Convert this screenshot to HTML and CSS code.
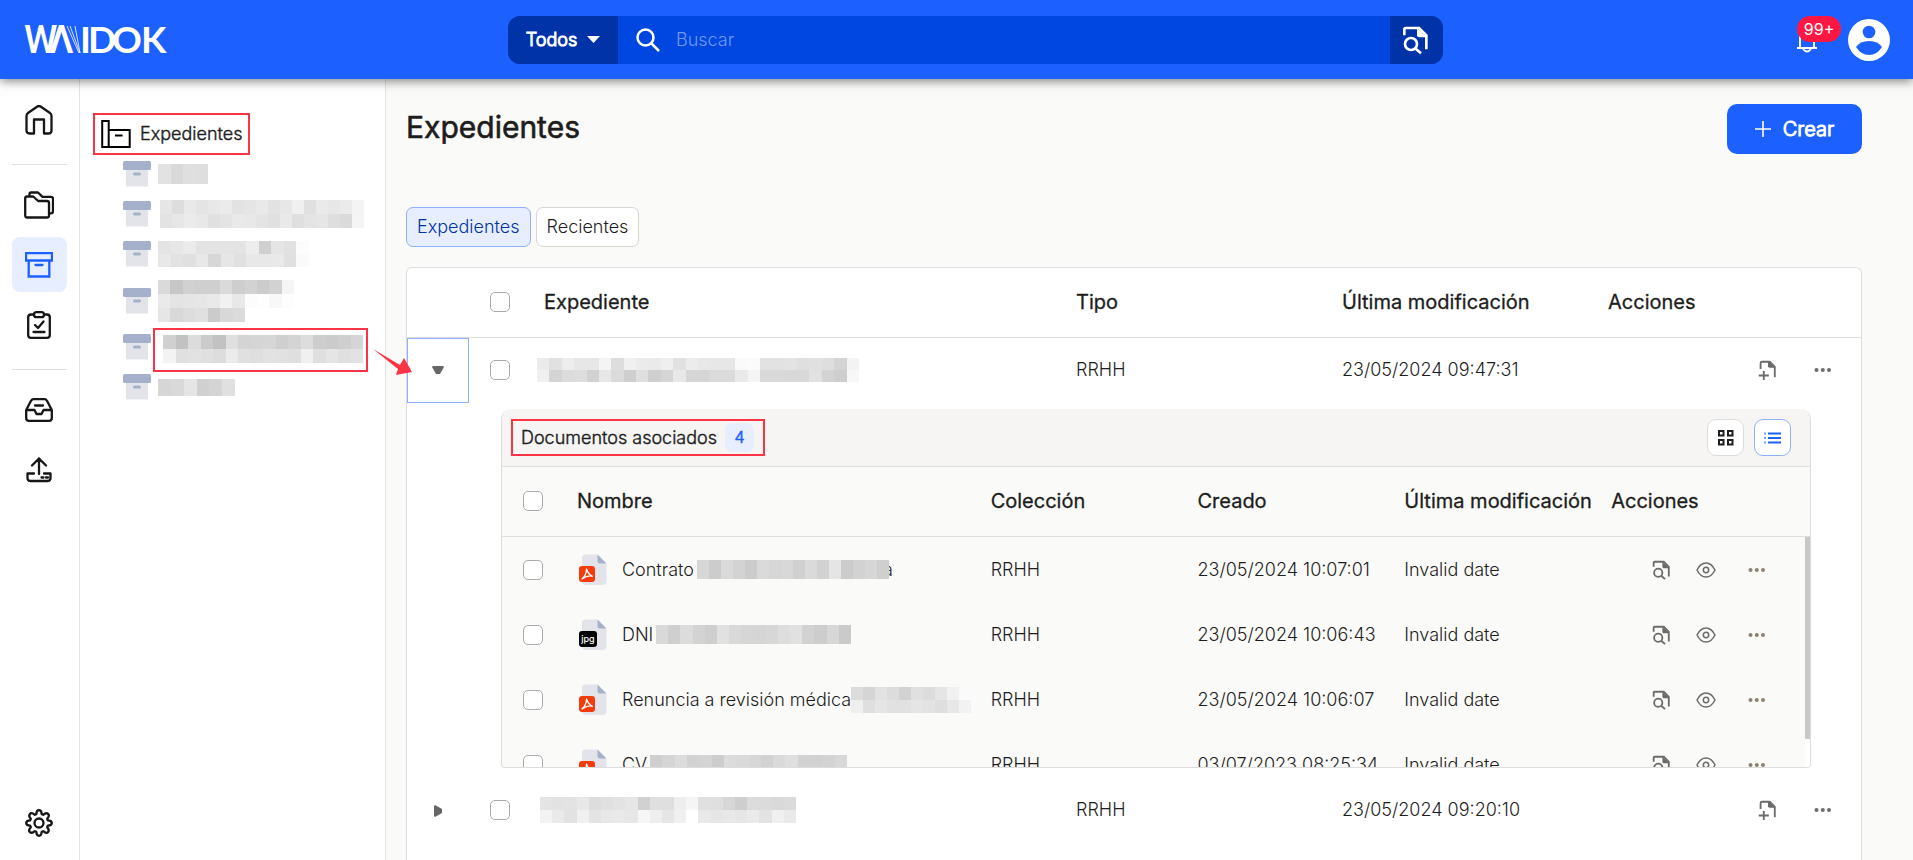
FILE: index.html
```html
<!DOCTYPE html>
<html lang="es">
<head>
<meta charset="utf-8">
<title>Expedientes</title>
<link rel="stylesheet" href="styles.css">
</head>
<body>
<svg class="defs" aria-hidden="true">
  <symbol id="archive" viewBox="0 0 28 26"><path d="M3 8h22v17.500H3z" fill="#e2e4ea"/><rect width="28" height="9" rx="1.500" fill="#a5b1ca"/><rect x="10" y="11.500" width="8" height="3" rx="1.500" fill="#a5b1ca"/></symbol>
  <symbol id="doc-search" viewBox="0 0 24 24"><g fill="none" stroke="currentColor" stroke-width="2"><path d="M4 8.500V4q0-1 1-1h10l5.500 5.500V19"/><circle cx="9" cy="15" r="4.500"/><path d="m12.500 18.500 4 3.500"/></g><path d="M13.500 3 21 10h-6q-1.500 0-1.500-1.500z" fill="currentColor"/></symbol>
  <symbol id="doc-add" viewBox="0 0 24 24"><g fill="none" stroke="currentColor" stroke-width="2"><path d="M5 11V4.500Q5 3 6.500 3H15l5.500 5.500V20M8.500 13v10M3 18h11"/></g><path d="M13 3h2l6 6.500h-6q-2 0-2-1.500z" fill="currentColor"/></symbol>
  <symbol id="eye" viewBox="0 0 20 16"><g fill="none" stroke="currentColor" stroke-width="1.500"><path d="M1 8Q4.500 1 10 1t9 7q-3.500 7-9 7T1 8z"/><circle cx="10" cy="8" r="2.700"/></g></symbol>
  <symbol id="dots" viewBox="0 0 18 4"><g fill="currentColor"><circle cx="2.500" cy="2" r="2"/><circle cx="8.800" cy="2" r="2"/><circle cx="15" cy="2" r="2"/></g></symbol>
  <symbol id="page" viewBox="0 0 28 32"><path d="M3 4q0-3.500 3.500-3.500H18L27.500 10v17q0 4-4 4H7q-4 0-4-4z" fill="#e2e4ea"/><path d="M18.500.5 27.500 9.500H21q-2.500 0-2.500-2.500z" fill="#a5b1ca"/></symbol>
  <symbol id="pdf" viewBox="0 0 28 32"><use href="#page"/><rect y="12" width="16" height="16" rx="3" fill="#f53a0c"/><path d="M7.500 15q1.500 5 6 7.300-4.500-1.500-10.500 2.700 4.500-4 4.500-10z" fill="none" stroke="#fff" stroke-width="1.300" stroke-linejoin="round"/></symbol>
  <symbol id="jpg" viewBox="0 0 28 32"><use href="#page"/><rect y="12" width="18" height="16" rx="3" fill="#000"/><text x="9" y="23" text-anchor="middle" fill="#fff" font-family="Inter, sans-serif" font-size="9" font-weight="500">jpg</text></symbol>
</svg>

<header class="topbar">
  <a class="brand" href="#" aria-label="WAIDOK">
    <svg width="144" height="30" viewBox="0 0 144 30"><g class="brand-narrow"><text x="0" y="28">W</text><text x="25" y="28">Λ</text></g><g class="brand-wide"><text x="56" y="28">I</text><text x="64" y="28">D</text><text x="88" y="28">O</text><text x="117" y="28">K</text></g><path d="m43 1 12 27M46 1l10 27M51 1l5 27" fill="none" stroke="#fff" stroke-width=".8"/></svg>
  </a>
  <form class="search" role="search">
    <button class="scope" type="button">Todos <svg width="13" height="7" viewBox="0 0 13 7"><path d="M0 0h13L6.500 7z" fill="#fff"/></svg></button>
    <label class="search-field"><svg width="24" height="24" viewBox="0 0 24 24" fill="none" stroke="#fff" stroke-width="2.500"><circle cx="9.500" cy="9.500" r="8"/><path d="m15 15 8 8"/></svg><input type="search" placeholder="Buscar" aria-label="Buscar"></label>
    <button class="advanced" type="button" aria-label="Búsqueda avanzada"><svg width="32" height="32"><use href="#doc-search"/></svg></button>
  </form>
  <div class="account">
    <button class="bell" type="button" aria-label="Notificaciones"><svg width="22" height="26" viewBox="0 0 22 26" fill="none" stroke="#fff" stroke-width="2"><path d="M1 21h20M4 21V11q0-7 7-7t7 7v10M7 22q4 5 8 0"/></svg><span class="count">99+</span></button>
    <button class="avatar" type="button" aria-label="Cuenta"><svg width="42" height="42" viewBox="0 0 42 42"><circle cx="21" cy="21" r="21" fill="#fff"/><circle cx="21" cy="13" r="6.300" fill="#1c61ff"/><path d="M8 28q4-6 13-6t13 6q-5 8-13 8T8 28z" fill="#1c61ff"/></svg></button>
  </div>
</header>

<div class="shell">
  <nav class="rail" aria-label="Principal">
    <a href="#" aria-label="Inicio"><svg width="28" height="30" viewBox="0 0 28 30"><path d="M1.500 11Q1.500 9 3 8l9-6.300q2-1.400 4 0L25 8q1.500 1 1.500 3v14.500q0 3-3 3H19V14.500H9v14H4.500q-3 0-3-3z"/></svg></a>
    <hr>
    <a href="#" aria-label="Documentos"><svg width="30" height="28" viewBox="0 0 30 28"><path d="M1.200 7.500q0-2 2-2h6l5 4.500H23q2 0 2 2v12.500q0 2-2 2H3.200q-2 0-2-2zM5.500 5V3q0-1.500 1.500-1.500h7l4.500 4.300H27q2 0 2 2v12.500q0 2-2 2h-1.500"/></svg></a>
    <a href="#" class="active" aria-label="Expedientes"><svg width="28" height="26" viewBox="0 0 28 26"><path d="M1 1h26v7.500H1zM3.700 8.500v16h20.600v-16M10.500 13h7"/></svg></a>
    <a href="#" aria-label="Tareas"><svg width="24" height="28" viewBox="0 0 24 28"><path d="M7 3.500H4q-2.800 0-2.800 2.800V24q0 2.800 2.800 2.800h16q2.800 0 2.800-2.800V6.300q0-2.800-2.800-2.800h-3M9.500 1.200h5q2.500 0 2.500 2.500t-2.500 2.500h-5Q7 6.200 7 3.700t2.500-2.500zM8 14l3 3 5.500-6.500M6.500 21h11"/></svg></a>
    <hr>
    <a href="#" aria-label="Bandeja"><svg width="28" height="24" viewBox="0 0 28 24"><path d="M1.200 12 6 2.800q1-1.600 2.500-1.600h11q1.500 0 2.500 1.600L26.800 12v8q0 2.800-2.800 2.800H4q-2.800 0-2.800-2.800zh8.300l2 4h5l2-4h8.300M10 7.500h8"/></svg></a>
    <a href="#" aria-label="Subir"><svg width="26" height="26" viewBox="0 0 26 26"><path d="M13 17V1.500M6 8.500l7-7 7 7M8 16.500H1.500V21q0 3 3 3h17q3 0 3-3v-4.500H18M15.500 20.500h2M20 20.500h2"/></svg></a>
    <a href="#" class="settings" aria-label="Ajustes"><svg width="30" height="30" viewBox="0 0 30 30"><circle cx="15" cy="15" r="4.500"/><path d="M12.300 5.200Q12.500 1.200 15 1.200t2.700 4l1.500.6q3-2.600 4.900-.9t-.9 4.900l.6 1.500q4 .2 4 2.700t-4 2.700l-.6 1.500q2.600 3 .9 4.900t-4.900-.9l-1.500.6q-.2 4-2.700 4t-2.700-4l-1.500-.6q-3 2.600-4.900.9t.9-4.900l-.6-1.500q-4-.2-4-2.700t4-2.700l.6-1.500q-2.600-3-.9-4.900t4.900.9z" transform="translate(0 1)"/></svg></a>
  </nav>

  <aside class="tree">
    <a class="root marked" href="#"><svg width="30" height="28" viewBox="0 0 30 28" fill="none" stroke="#000" stroke-width="2"><path d="M1.200 1h6.500v26H1.200zM7.700 10h21v17h-21M14 15.500h7.500"/></svg>Expedientes</a>
    <ul>
      <li><svg width="28" height="26"><use href="#archive"/></svg><span class="mosaic" data-cell="12.5x20" data-rows="e2 d9 df de"></span></li>
      <li><svg width="28" height="26"><use href="#archive"/></svg><span class="mosaic inset" data-cell="12x14" data-rows="e6 dd e9 e4 e8 eb e2 e5 e9 e2 e7 f0 e0 ea e7 eb f4/e3 e7 eb e8 e0 e4 e9 e8 e4 e0 e9 df e4 e6 de da f5"></span></li>
      <li><svg width="28" height="26"><use href="#archive"/></svg><span class="mosaic" data-cell="12.6x13" data-rows="e4 e7 eb e3 e4 e4 e3 ed d0 e5 e1 fc/e8 e2 e0 e8 d7 e6 e0 e8 e8 e9 e0 fa"></span></li>
      <li class="tall"><svg width="28" height="26"><use href="#archive"/></svg><span class="mosaic" data-cell="12.4x14" data-rows="da c7 d1 cf cf da ce d2 cc d2 f5/ea e4 e5 e6 e9 f1 e8 fc fe f8 fd/e6 d8 dd e0 cb d8 db"></span></li>
      <li><svg width="28" height="26"><use href="#archive"/></svg><span class="marked hit"><span class="mosaic" data-cell="12.5x14" data-rows="d0 c2 dc cb c2 df d4 d5 d6 cf d4 dd cd cb cf d5/f3 e0 e2 e0 dd eb e0 de e2 e1 df f0 df e5 e0 e2"></span></span></li>
      <li><svg width="28" height="26"><use href="#archive"/></svg><span class="mosaic" data-cell="12.8x17" data-rows="d6 d9 e5 d0 d5 e0"></span></li>
    </ul>
    <svg class="arrow" width="40" height="28" viewBox="0 0 40 28"><path d="M0 0 27 16 31 9 39 23 23 26 25 20Z" fill="#fb3445"/></svg>
  </aside>

  <main class="content">
    <div class="heading"><h1>Expedientes</h1><button class="create" type="button"><svg width="16" height="16" viewBox="0 0 16 16"><path d="M8 0v16M0 8h16" stroke="#fff" stroke-width="1.600"/></svg>Crear</button></div>
    <div class="tabs"><button class="tab selected" type="button">Expedientes</button><button class="tab" type="button">Recientes</button></div>

    <table class="files">
      <thead><tr><th></th><th><input type="checkbox" aria-label="Seleccionar todo"></th><th>Expediente</th><th>Tipo</th><th>Última modificación</th><th>Acciones</th></tr></thead>
      <tbody>
        <tr>
          <td class="expander"><button class="open" type="button" aria-label="Contraer"><svg width="12" height="9" viewBox="0 0 12 9"><path d="M1 0h10l1 1-4 7H4L0 1z" fill="#666"/></svg></button></td>
          <td><input type="checkbox" aria-label="Seleccionar expediente"></td>
          <td class="masked"><span class="mosaic" data-cell="12.4x12" data-rows="eb e1 ed e7 e7 f4 dd f0 eb ea ef e1 ec e8 e7 e7 fa fb e2 e2 e3 df e0 de d4 f3/f0 d4 dc dd d1 e7 db cf df cf d5 e8 d6 d6 db db e9 f4 d9 d9 d8 d8 e1 d3 ce f7"></span></td>
          <td>RRHH</td><td>23/05/2024 09:47:31</td>
          <td class="actions"><button type="button" aria-label="Añadir documento"><svg width="22" height="22"><use href="#doc-add"/></svg></button><button type="button" aria-label="Más"><svg width="18" height="4"><use href="#dots"/></svg></button></td>
        </tr>
        <tr class="detail"><td colspan="6">
          <section class="panel">
            <div class="panel-bar"><h2 class="marked">Documentos asociados <span class="badge">4</span></h2>
              <div class="views"><button type="button" aria-label="Cuadrícula"><svg width="16" height="16" viewBox="0 0 16 16" fill="none" stroke="#1d1d1d" stroke-width="2"><path d="M1 1h4.500v4.500H1zM10 1h4.500v4.500H10zM1 10h4.500v4.500H1zM10 10h4.500v4.500H10z"/></svg></button><button class="on" type="button" aria-label="Lista"><svg width="17" height="12" viewBox="0 0 17 12" stroke="#1c61ff" stroke-width="2"><path d="M4 1.500h13M4 6h13M4 10.500h13"/><path d="M0 1.500h2M0 6h2M0 10.500h2" opacity=".6"/></svg></button></div>
            </div>
            <table class="docs">
              <thead><tr><th><input type="checkbox" aria-label="Seleccionar documentos"></th><th>Nombre</th><th>Colección</th><th>Creado</th><th>Última modificación</th><th>Acciones</th></tr></thead>
              <tbody>
                <tr><td><input type="checkbox" aria-label="Seleccionar Contrato"></td><td class="name"><svg width="28" height="32"><use href="#pdf"/></svg><span>Contrato</span><span class="mosaic" data-cell="12x19" data-rows="d7 cc da d3 cc da d6 d8 d0 da d2 e5 cc d2 d7 cf"></span><span class="tail">a</span></td><td>RRHH</td><td>23/05/2024 10:07:01</td><td>Invalid date</td><td class="actions"></td></tr>
                <tr><td><input type="checkbox" aria-label="Seleccionar DNI"></td><td class="name"><svg width="28" height="32"><use href="#jpg"/></svg><span>DNI</span><span class="mosaic" data-cell="12.2x19" data-rows="d9 cf dc d3 ce e1 d9 d6 d5 d7 dd e1 d2 cd d7 ca"></span></td><td>RRHH</td><td>23/05/2024 10:06:43</td><td>Invalid date</td><td class="actions"></td></tr>
                <tr><td><input type="checkbox" aria-label="Seleccionar Renuncia"></td><td class="name close"><svg width="28" height="32"><use href="#pdf"/></svg><span>Renuncia a revisión médica</span><span class="mosaic" data-cell="12x13" data-rows="dc d5 e2 dc d2 e0 dc e5 f1 fa/ef df e5 e1 e1 e5 e3 de e7 f2"></span></td><td>RRHH</td><td>23/05/2024 10:06:07</td><td>Invalid date</td><td class="actions"></td></tr>
                <tr><td><input type="checkbox" aria-label="Seleccionar CV"></td><td class="name"><svg width="28" height="32"><use href="#pdf"/></svg><span>CV</span><span class="mosaic" data-cell="12.3x19" data-rows="cf d5 dc d2 d4 cd dc da d7 d2 da df d2 d1 d3 d8"></span></td><td>RRHH</td><td>03/07/2023 08:25:34</td><td>Invalid date</td><td class="actions"></td></tr>
              </tbody>
            </table>
            <div class="scroll"><div class="thumb"></div></div>
          </section>
        </td></tr>
        <tr>
          <td class="expander"><button type="button" aria-label="Expandir"><svg width="9" height="12" viewBox="0 0 9 12"><path d="M0 1 1 0l7 4v4l-7 4-1-1z" fill="#666"/></svg></button></td>
          <td><input type="checkbox" aria-label="Seleccionar expediente"></td>
          <td class="masked inset"><span class="mosaic" data-cell="12.2x13" data-rows="e4 e2 e3 e8 dd e0 e3 e6 d1 df df ee f5 e0 df d7 ce dc db d9 db/f2 ea e2 f0 e4 e8 e9 e7 f6 ee e6 f0 ff e9 e6 e8 e6 ea e3 f0 e9"></span></td>
          <td>RRHH</td><td>23/05/2024 09:20:10</td>
          <td class="actions"><button type="button" aria-label="Añadir documento"><svg width="22" height="22"><use href="#doc-add"/></svg></button><button type="button" aria-label="Más"><svg width="18" height="4"><use href="#dots"/></svg></button></td>
        </tr>
      </tbody>
    </table>
  </main>
</div>
<script src="app.js"></script>
</body>
</html>
```
FILE: styles.css
```css
* { box-sizing: border-box; }
body { margin: 0; height: 100vh; display: flex; flex-direction: column; overflow: hidden; font: 300 18px/24px Inter, "Liberation Sans", sans-serif; color: #1d1d1d; background: #fafaf8; }
button { font: inherit; color: inherit; border: 0; padding: 0; background: none; display: flex; align-items: center; justify-content: center; }
a { color: inherit; text-decoration: none; }
svg { flex: none; display: block; }
.defs { position: absolute; width: 0; height: 0; }

.topbar { position: relative; z-index: 2; flex: none; height: 79px; padding: 0 23px 0 61px; background: #1c61ff; box-shadow: 0 2px 10px rgba(0, 0, 0, .5); display: grid; grid-template-columns: 1fr 935px 1fr; align-items: center; }
.brand { margin-left: -37px; }
.brand-narrow { font: 500 38px Roboto, sans-serif; fill: #fff; }
.brand-wide { font: 700 37px Lato, sans-serif; fill: #fff; }
.search { display: flex; height: 48px; border-radius: 12px; overflow: hidden; background: #0047e1; }
.scope { width: 110px; gap: 10px; color: #fff; background: #0033a8; -webkit-text-stroke: 1px; }
.search-field { flex: 1; display: flex; align-items: center; gap: 16px; padding-left: 18px; }
.search-field input { flex: 1; min-width: 0; border: 0; padding: 0; outline: 0; background: none; font: inherit; color: #fff; }
.search-field input::placeholder { color: #6f9af5; opacity: 1; }
.advanced { width: 53px; padding-right: 4px; color: #fff; background: #0033a8; }
.account { display: flex; justify-content: flex-end; align-items: center; gap: 30px; }
.bell { position: relative; }
.count { position: absolute; left: 1px; top: -11px; width: 44px; height: 26px; border-radius: 13px; background: #ff1744; color: #fff; font-size: 16px; line-height: 26px; font-weight: 400; }

.shell { flex: 1; min-height: 0; display: flex; }
.rail { width: 80px; flex: none; padding: 13px 0 10px; background: #fff; border-right: 1px solid #e4e4e4; display: flex; flex-direction: column; align-items: center; gap: 5px; }
.rail a { width: 55px; height: 55px; padding-right: 1px; border-radius: 8px; display: flex; align-items: center; justify-content: center; }
.rail svg { fill: none; stroke: #161616; stroke-width: 2.300; stroke-linejoin: round; stroke-linecap: round; }
.rail .active { background: #e6eeff; }
.rail .active svg { stroke: #1c61ff; stroke-linejoin: miter; }
.rail hr { width: 55px; margin: 12px 0 7px; border: 0; border-top: 1px solid #ddd; }
.rail .settings { margin-top: auto; }

.tree { position: relative; z-index: 1; width: 306px; flex: none; padding: 34px 17px 0 13px; background: #fff; border-right: 1px solid #e4e4e4; }
.marked { border: 2px solid #fb3445; }
.root { display: flex; align-items: center; gap: 9px; width: 157px; height: 42px; padding-left: 6px; -webkit-text-stroke: .4px; }
.tree ul { list-style: none; margin: -1px 0 0; padding: 0 0 0 30px; }
.tree li { display: flex; align-items: center; height: 40px; gap: 7px; }
.tree li .inset { margin-left: 2px; }
.tree li.tall { height: 53px; }
.tree li .hit { margin: 6px 0 0 -5px; height: 44px; padding: 5px 3px 0 8px; }
.arrow { position: absolute; left: 293px; top: 270px; }
.mosaic { display: grid; flex: none; }

.content { flex: 1; min-width: 0; padding: 25px 51px 0 20px; display: flex; flex-direction: column; }
.heading { display: flex; justify-content: space-between; align-items: flex-start; }
h1 { margin: 0; font-size: 30px; line-height: 46px; font-weight: 400; -webkit-text-stroke: .6px; }
.create { width: 135px; height: 50px; gap: 12px; border-radius: 10px; background: #1c61ff; color: #fff; font-size: 20px; -webkit-text-stroke: 1px; }
.tabs { display: flex; gap: 5px; margin: 53px 0 20px; }
.tab { height: 40px; padding: 0 10px; border: 1px solid #d8d8d2; border-radius: 7px; background: #fff; }
.tab.selected { border-color: #8fb1ff; background: #e6eeff; color: #0033a8; }

table { display: block; }
thead, tbody { display: block; }
tr { display: grid; align-items: center; height: 65px; }
th, td { display: block; padding: 0 0 2px 16px; text-align: left; }
th { font-size: 20px; font-weight: 400; -webkit-text-stroke: .3px; white-space: nowrap; }
thead tr { height: 70px; border-bottom: 1px solid #ddd; }
input[type=checkbox] { appearance: none; display: block; width: 20px; height: 20px; margin: 0; border: 1px solid #aaa; border-radius: 5px; background: #fff; }
.files { flex: 1; min-height: 0; border: 1px solid #ddd; border-bottom: 0; border-radius: 6px 6px 0 0; background: #fff; }
.files > * > tr { grid-template-columns: 62px 59px 2fr 1fr 1fr 1fr; padding-right: 3px; }
.files > * > tr > :nth-child(2) { padding-left: 21px; }
.files td.expander { padding: 0; }
.expander button { width: 62px; height: 65px; }
.expander .open { border: 1px solid #8fb1ff; }
.files td.masked { padding-left: 9px; }
.files td.inset { padding-left: 12px; }
.actions { display: flex; justify-content: flex-end; align-items: center; color: #6b6b6b; }
.files > tbody > tr > .actions { padding-right: 26px; gap: 36px; }
.files > tbody > .detail { display: block; height: auto; padding: 6px 50px 10px 94px; }
.detail > td { padding: 0; }

.panel { position: relative; border-radius: 10px 10px 4px 4px; overflow: hidden; background: #fafaf8; border: 1px solid #ddd; border-top: 0; }
.panel-bar { height: 58px; padding: 0 19px 0 9px; background: #f6f5f4; border-bottom: 1px solid #ddd; display: flex; align-items: center; justify-content: space-between; }
h2 { margin: 0; display: flex; align-items: center; gap: 8px; width: 254px; height: 37px; padding-left: 8px; font-size: 18px; font-weight: 300; -webkit-text-stroke: .4px; }
.badge { width: 29px; height: 29px; border-radius: 7px; background: #e6eeff; color: #1c61ff; font-size: 16px; line-height: 29px; text-align: center; -webkit-text-stroke: .6px; }
.views { display: flex; gap: 10px; }
.views button { width: 37px; height: 37px; border: 1px solid #ddd; border-radius: 9px; background: #fff; }
.views .on { border-color: #8fb1ff; }
.docs tr { grid-template-columns: 59px 2fr 1fr 1fr 1fr 1fr; padding-right: 8px; }
.docs td { padding-bottom: 0; }
.docs tr > :first-child { padding-left: 21px; }
.docs tbody { height: 230px; overflow: hidden; }
.name { display: flex; align-items: center; white-space: nowrap; }
.docs td.name { padding-left: 18px; }
.name svg { margin-right: 15px; }
.name .mosaic { margin-left: 3px; }
.close .mosaic { margin-left: 0; }
.tail { width: 4px; display: flex; justify-content: flex-end; overflow: hidden; }
.docs .actions { padding-right: 36px; }
.docs .actions button + button { margin-left: 24px; }
.docs .actions button + .more { margin-left: 32px; color: #8d8272; }
.scroll { position: absolute; right: 0; top: 128px; bottom: 0; width: 5px; background: #fff; }
.thumb { height: 88%; background: #c8c8c8; }
```
FILE: app.js
```js
// Redacted names: each two-digit value is the grey level of one cell.
document.querySelectorAll('.mosaic').forEach(function (box) {
  var size = box.dataset.cell.split('x');
  box.dataset.rows.split('/').forEach(function (line) {
    var row = document.createElement('span');
    var cells = line.split(' ');
    var width = Math.round(cells.length * size[0]);
    row.style.width = width + 'px';
    row.style.height = size[1] + 'px';
    row.style.background = 'linear-gradient(90deg,' + cells.map(function (v, i) {
      var c = '#' + v + v + v;
      return c + ' ' + Math.round(i * width / cells.length) + 'px ' + Math.round((i + 1) * width / cells.length) + 'px';
    }).join(',') + ')';
    box.appendChild(row);
  });
});

// Every document row carries the same three actions.
document.querySelectorAll('.docs tbody .actions').forEach(function (cell) {
  cell.innerHTML =
    '<button type="button" aria-label="Buscar en documento"><svg width="22" height="22"><use href="#doc-search"/></svg></button>' +
    '<button type="button" aria-label="Ver"><svg width="20" height="16"><use href="#eye"/></svg></button>' +
    '<button type="button" class="more" aria-label="Más"><svg width="18" height="4"><use href="#dots"/></svg></button>';
});
```
